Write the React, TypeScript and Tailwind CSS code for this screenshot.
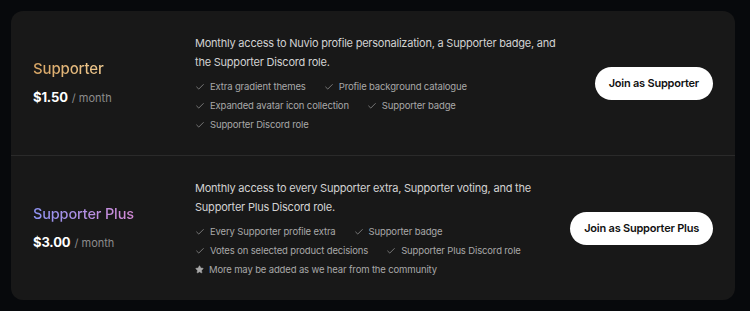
import { Check, Star } from 'lucide-react'

type Feature = { label: string; star?: boolean }

type Tier = {
    name: string
    nameClass: string
    price: string
    description: string
    features: Feature[]
    cta: string
}

const tiers: Tier[] = [
    {
        name: 'Supporter',
        nameClass: 'bg-gradient-to-r from-[#d6a464] to-[#efc98f] text-[15px]',
        price: '$1.50',
        description:
            'Monthly access to Nuvio profile personalization, a Supporter badge, and the Supporter Discord role.',
        features: [
            { label: 'Extra gradient themes' },
            { label: 'Profile background catalogue' },
            { label: 'Expanded avatar icon collection' },
            { label: 'Supporter badge' },
            { label: 'Supporter Discord role' },
        ],
        cta: 'Join as Supporter',
    },
    {
        name: 'Supporter Plus',
        nameClass: 'bg-gradient-to-r from-[#8d93f2] to-[#d48ad6] text-[14.5px]',
        price: '$3.00',
        description:
            'Monthly access to every Supporter extra, Supporter voting, and the Supporter Plus Discord role.',
        features: [
            { label: 'Every Supporter profile extra' },
            { label: 'Supporter badge' },
            { label: 'Votes on selected product decisions' },
            { label: 'Supporter Plus Discord role' },
            { label: 'More may be added as we hear from the community', star: true },
        ],
        cta: 'Join as Supporter Plus',
    },
]

const TierRow = ({ tier }: { tier: Tier }) => {
    return (
        <div className="flex items-center h-[144px] pl-[22px] pr-[22px]">
            <div className="w-[162px] shrink-0 flex flex-col gap-[8px]">
                <span
                    className={`${tier.nameClass} bg-clip-text text-transparent font-medium leading-[20px] tracking-[-0.01em] w-fit`}
                >
                    {tier.name}
                </span>
                <div className="flex items-baseline gap-[4px] leading-[20px]">
                    <span className="text-[13px] font-bold text-white tracking-[-0.01em]">{tier.price}</span>
                    <span className="text-[11px] text-[#8c8c8c]">/ month</span>
                </div>
            </div>
            <div className="flex-1 min-w-0 pt-[2px]">
                <p className="text-[11px] leading-[19px] tracking-[-0.02em] text-[#d2d2d2] max-w-[372px]">
                    {tier.description}
                </p>
                <ul className="mt-[5px] flex flex-wrap gap-x-[18px] max-w-[372px]">
                    {tier.features.map((f) => (
                        <li
                            key={f.label}
                            className="flex items-center gap-[5px] text-[9.5px] leading-[19px] tracking-[-0.015em] text-[#a8a8a8]"
                        >
                            {f.star ? (
                                <Star size={9} className="fill-[#a8a8a8] text-[#a8a8a8]" strokeWidth={1.5} />
                            ) : (
                                <Check size={10} className="text-[#9a9a9a]" strokeWidth={1.75} />
                            )}
                            {f.label}
                        </li>
                    ))}
                </ul>
            </div>
            <button className="shrink-0 ml-6 h-[33px] px-[14px] rounded-full bg-white text-[#111] text-[11px] font-semibold tracking-[-0.02em]">
                {tier.cta}
            </button>
        </div>
    )
}

const App = () => {
    return (
        <div
            className="min-h-[311px] w-full bg-[#07090c] p-[11px] pr-[15px]"
            style={{ fontFamily: 'Inter, "Noto Sans", sans-serif' }}
        >
            <div className="rounded-[12px] bg-[#181818] overflow-hidden">
                <TierRow tier={tiers[0]} />
                <div className="h-px bg-[#2a2a2a]" />
                <TierRow tier={tiers[1]} />
            </div>
        </div>
    )
}

export default App
